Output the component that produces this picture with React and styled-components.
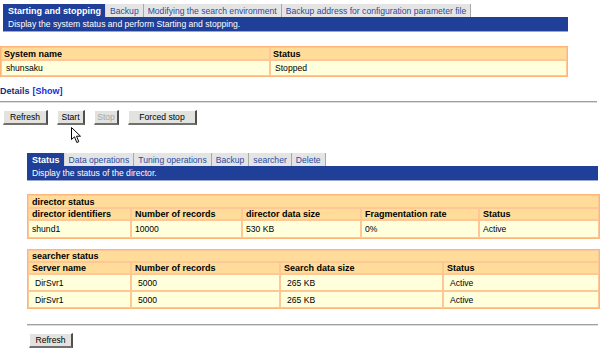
import styled, { createGlobalStyle } from 'styled-components';

const GlobalStyle = createGlobalStyle`
    body {
        margin: 0;
        background: #ffffff;
        font-family: "Liberation Sans", Arial, sans-serif;
        font-size: 8.6px;
        color: #000000;
    }
`;

const BLUE = '#203f98';

const Page = styled.div`
    position: relative;
    width: 600px;
    height: 353px;
    padding-top: 4px;
    box-sizing: border-box;
    overflow: hidden;
`;

const Section = styled.div`
    margin-left: ${(props) => props.indent || 0}px;
`;

// 탭 줄
const TabStrip = styled.div`
    display: flex;
    height: 13px;
    margin-top: ${(props) => props.top || 0}px;
    margin-left: ${(props) => props.offset || 0}px;
`;

const Tab = styled.div`
    display: flex;
    align-items: center;
    padding: 0 4px 0 ${(props) => (props.active ? 5 : 4)}px;
    background: ${(props) => (props.active ? BLUE : '#e4e4e4')};
    color: ${(props) => (props.active ? '#ffffff' : '#2b4aa0')};
    font-weight: ${(props) => (props.active ? 'bold' : 'normal')};
    font-size: ${(props) => (props.active ? '9px' : '8.6px')};
    border-right: 1px solid ${(props) => (props.active ? '#d8d8d8' : '#a8a8a8')};
    white-space: nowrap;
`;

const InfoBar = styled.div`
    width: ${(props) => props.width}px;
    height: 15px;
    margin-left: ${(props) => props.offset || 0}px;
    box-sizing: border-box;
    padding-left: 5px;
    display: flex;
    align-items: center;
    background: ${BLUE};
    color: #ffffff;
    border-bottom: 1px solid #9aa8d0;
    white-space: nowrap;
`;

const StatusTable = styled.table`
    width: ${(props) => props.width}px;
    margin-top: ${(props) => props.top || 0}px;
    border-collapse: separate;
    border-spacing: 0;
    border: 1px solid #ffb57a;
    table-layout: fixed;
`;

const Cell = styled.td`
    box-sizing: border-box;
    border: 1px solid #ffc796;
    padding: 0 0 0 ${(props) => props.pad || 3}px;
    height: ${(props) => props.h}px;
    vertical-align: middle;
    white-space: nowrap;
    overflow: hidden;
    background: ${(props) => (props.head ? '#ffdc9a' : '#ffffdc')};
    font-weight: ${(props) => (props.head ? 'bold' : 'normal')};
    font-size: ${(props) => (props.head ? '9px' : '8.6px')};
    line-height: 10px;
`;

const DetailsLine = styled.div`
    margin-top: 9px;
    height: 10px;
    line-height: 10px;
    font-weight: bold;
    font-size: 9px;
    color: #1a2b7a;
`;

const ShowLink = styled.span`
    color: #1030d8;
    margin-left: 3px;
`;

const Rule = styled.div`
    width: ${(props) => props.width}px;
    margin-top: ${(props) => props.top}px;
    height: 1px;
    background: #a0a0a0;
    border-bottom: 1px solid #dcdcdc;
`;

const ButtonRow = styled.div`
    display: flex;
    gap: 9px;
    margin-top: ${(props) => props.top}px;
    margin-left: ${(props) => props.offset}px;
`;

const Button = styled.div`
    height: 15px;
    width: ${(props) => props.w}px;
    box-sizing: border-box;
    display: flex;
    align-items: center;
    justify-content: center;
    background: #e2e2de;
    border-top: 1px solid #ffffff;
    border-left: 1px solid #ffffff;
    border-right: 2px solid #505050;
    border-bottom: 2px solid #707070;
    color: ${(props) => (props.disabled ? '#a8a8a8' : '#000000')};
    font-size: 8.6px;
    white-space: nowrap;
`;

const Cursor = styled.svg`
    position: absolute;
    left: 71px;
    top: 127px;
`;

const tabs = ['Starting and stopping', 'Backup', 'Modifying the search environment', 'Backup address for configuration parameter file'];
const subTabs = ['Status', 'Data operations', 'Tuning operations', 'Backup', 'searcher', 'Delete'];

const directorCols = [103, 111, 119, 118, 120];
const searcherCols = [103, 149, 163, 156];

const searchers = [
    ['DirSvr1', '5000', '265 KB', 'Active'],
    ['DirSvr1', '5000', '265 KB', 'Active'],
];

const App = () => (
    <Page>
        <GlobalStyle />
        <TabStrip offset={3}>
            {tabs.map((t, i) => (
                <Tab key={t} active={i === 0}>{t}</Tab>
            ))}
        </TabStrip>
        <InfoBar offset={3} width={565}>Display the system status and perform Starting and stopping.</InfoBar>

        <StatusTable width={568} top={14}>
            <colgroup>
                <col style={{ width: 269 }} />
                <col />
            </colgroup>
            <tbody>
                <tr>
                    <Cell head h={13} pad={2}>System name</Cell>
                    <Cell head h={13} pad={2}>Status</Cell>
                </tr>
                <tr>
                    <Cell h={16} pad={4}>shunsaku</Cell>
                    <Cell h={16} pad={4}>Stopped</Cell>
                </tr>
            </tbody>
        </StatusTable>

        <DetailsLine>
            Details<ShowLink>[Show]</ShowLink>
        </DetailsLine>
        <Rule width={597} top={5} />

        <ButtonRow top={7} offset={3}>
            <Button w={45}>Refresh</Button>
            <Button w={28}>Start</Button>
            <Button w={25} disabled>Stop</Button>
            <Button w={69}>Forced stop</Button>
        </ButtonRow>

        <Section indent={27}>
            <TabStrip top={28}>
                {subTabs.map((t, i) => (
                    <Tab key={t} active={i === 0}>{t}</Tab>
                ))}
            </TabStrip>
            <InfoBar width={571}>Display the status of the director.</InfoBar>

            <StatusTable width={571} top={13}>
                <colgroup>
                    {directorCols.map((w, i) => (
                        <col key={i} style={{ width: w }} />
                    ))}
                </colgroup>
                <tbody>
                    <tr>
                        <Cell head h={13} colSpan={5}>director status</Cell>
                    </tr>
                    <tr>
                        <Cell head h={12}>director identifiers</Cell>
                        <Cell head h={12}>Number of records</Cell>
                        <Cell head h={12}>director data size</Cell>
                        <Cell head h={12}>Fragmentation rate</Cell>
                        <Cell head h={12}>Status</Cell>
                    </tr>
                    <tr>
                        <Cell h={18}>shund1</Cell>
                        <Cell h={18}>10000</Cell>
                        <Cell h={18}>530 KB</Cell>
                        <Cell h={18}>0%</Cell>
                        <Cell h={18}>Active</Cell>
                    </tr>
                </tbody>
            </StatusTable>

            <StatusTable width={571} top={10}>
                <colgroup>
                    {searcherCols.map((w, i) => (
                        <col key={i} style={{ width: w }} />
                    ))}
                </colgroup>
                <tbody>
                    <tr>
                        <Cell head h={12} colSpan={4}>searcher status</Cell>
                    </tr>
                    <tr>
                        <Cell head h={12}>Server name</Cell>
                        <Cell head h={12}>Number of records</Cell>
                        <Cell head h={12}>Search data size</Cell>
                        <Cell head h={12}>Status</Cell>
                    </tr>
                    {searchers.map((row, r) => (
                        <tr key={r}>
                            {row.map((v, c) => (
                                <Cell key={c} h={17} pad={6}>{v}</Cell>
                            ))}
                        </tr>
                    ))}
                </tbody>
            </StatusTable>

            <Rule width={571} top={15} />
            <ButtonRow top={7} offset={2}>
                <Button w={44}>Refresh</Button>
            </ButtonRow>
        </Section>

        <Cursor width="11" height="17" viewBox="0 0 11 17">
            <path d="M0.5 0.5 L0.5 12.5 L3.5 9.8 L5.8 15.5 L7.8 14.7 L5.5 9.2 L9.5 9.2 Z" fill="#ffffff" stroke="#000000" strokeWidth="1" />
        </Cursor>
    </Page>
);

export default App;
